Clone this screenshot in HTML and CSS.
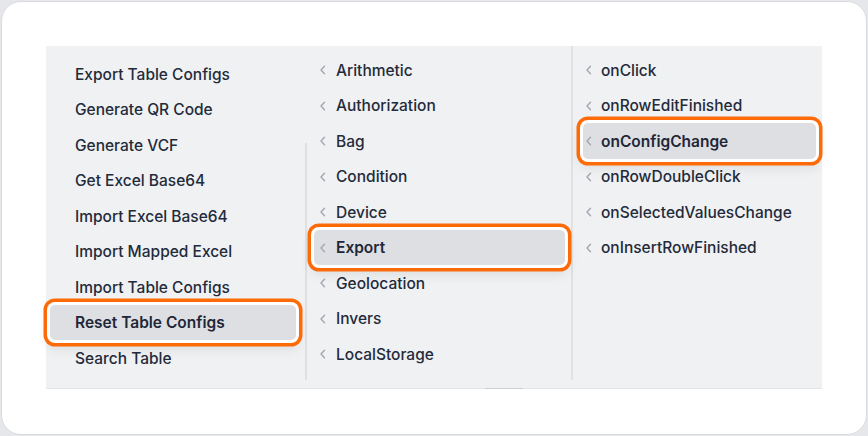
FILE: index.html
```html
<!DOCTYPE html>
<html lang="en">
<head>
<meta charset="utf-8">
<title>Menu</title>
<link rel="stylesheet" href="styles.css">
</head>
<body>
<div class="card">
  <div class="panel">
    <div class="cols">
      <ul class="col col1">
        <li class="item">Export Table Configs</li>
        <li class="item">Generate QR Code</li>
        <li class="item">Generate VCF</li>
        <li class="item">Get Excel Base64</li>
        <li class="item">Import Excel Base64</li>
        <li class="item">Import Mapped Excel</li>
        <li class="item">Import Table Configs</li>
        <li class="item active">Reset Table Configs</li>
        <li class="item">Search Table</li>
      </ul>
      <ul class="col col2">
        <li class="item"><svg class="chev" viewBox="0 0 10 10"><path d="M6.5 1.2 L3 5 L6.5 8.8"/></svg>Arithmetic</li>
        <li class="item"><svg class="chev" viewBox="0 0 10 10"><path d="M6.5 1.2 L3 5 L6.5 8.8"/></svg>Authorization</li>
        <li class="item"><svg class="chev" viewBox="0 0 10 10"><path d="M6.5 1.2 L3 5 L6.5 8.8"/></svg>Bag</li>
        <li class="item"><svg class="chev" viewBox="0 0 10 10"><path d="M6.5 1.2 L3 5 L6.5 8.8"/></svg>Condition</li>
        <li class="item"><svg class="chev" viewBox="0 0 10 10"><path d="M6.5 1.2 L3 5 L6.5 8.8"/></svg>Device</li>
        <li class="item active"><svg class="chev" viewBox="0 0 10 10"><path d="M6.5 1.2 L3 5 L6.5 8.8"/></svg>Export</li>
        <li class="item"><svg class="chev" viewBox="0 0 10 10"><path d="M6.5 1.2 L3 5 L6.5 8.8"/></svg>Geolocation</li>
        <li class="item"><svg class="chev" viewBox="0 0 10 10"><path d="M6.5 1.2 L3 5 L6.5 8.8"/></svg>Invers</li>
        <li class="item"><svg class="chev" viewBox="0 0 10 10"><path d="M6.5 1.2 L3 5 L6.5 8.8"/></svg>LocalStorage</li>
      </ul>
      <ul class="col col3">
        <li class="item"><svg class="chev" viewBox="0 0 10 10"><path d="M6.5 1.2 L3 5 L6.5 8.8"/></svg>onClick</li>
        <li class="item"><svg class="chev" viewBox="0 0 10 10"><path d="M6.5 1.2 L3 5 L6.5 8.8"/></svg>onRowEditFinished</li>
        <li class="item active"><svg class="chev" viewBox="0 0 10 10"><path d="M6.5 1.2 L3 5 L6.5 8.8"/></svg>onConfigChange</li>
        <li class="item"><svg class="chev" viewBox="0 0 10 10"><path d="M6.5 1.2 L3 5 L6.5 8.8"/></svg>onRowDoubleClick</li>
        <li class="item"><svg class="chev" viewBox="0 0 10 10"><path d="M6.5 1.2 L3 5 L6.5 8.8"/></svg>onSelectedValuesChange</li>
        <li class="item"><svg class="chev" viewBox="0 0 10 10"><path d="M6.5 1.2 L3 5 L6.5 8.8"/></svg>onInsertRowFinished</li>
      </ul>
    </div>
    <div class="hscroll"><span class="hthumb"></span></div>
  </div>
</div>
</body>
</html>
```

FILE: styles.css
```css
* { box-sizing: border-box; }

html, body {
  margin: 0;
  padding: 0;
  background: #e6e7ea;
}

body {
  width: 868px;
  height: 436px;
  overflow: hidden;
  font-family: Inter, "Noto Sans", "Liberation Sans", sans-serif;
}

.card {
  margin: 1px;
  width: 866px;
  height: 434px;
  background: #ffffff;
  border: 1px solid #d9dbe0;
  border-radius: 20px;
  padding: 44px;
}

.panel {
  width: 776px;
  height: 343px;
  background: #f0f1f3;
  border-bottom: 1px solid #e3e4e7;
  display: flex;
  flex-direction: column;
}

.cols {
  display: flex;
  height: 335px;
}

.col {
  list-style: none;
  margin: 0;
  display: flex;
  flex-direction: column;
  position: relative;
}

.col1 {
  width: 261px;
  padding: 10.25px 0 0 0;
}

.col1::after {
  content: "";
  position: absolute;
  right: 0;
  top: 97px;
  bottom: 0;
  width: 2px;
  background: #dfe0e3;
}

.col2 {
  width: 264px;
  padding: 6.25px 0 0 0;
}

.col3 {
  width: 251px;
  padding: 6.25px 0 0 0;
  border-left: 2px solid #e0e1e4;
}

.item {
  height: 35.5px;
  flex: 0 0 35.5px;
  display: flex;
  align-items: center;
  font-size: 15.5px;
  font-weight: 500;
  color: #232b3b;
  border-radius: 5px;
  white-space: nowrap;
}

.col1 .item {
  margin: 0 11px 0 4px;
  padding-left: 25px;
}

.col2 .item {
  margin: 0 6px 0 7px;
  padding-left: 4px;
}

.col3 .item {
  margin: 0 6px 0 10px;
  padding-left: 1px;
}

.chev {
  width: 10px;
  height: 10px;
  flex: 0 0 10px;
  fill: none;
  stroke: #a3a8b0;
  stroke-width: 1.4;
  stroke-linecap: round;
  stroke-linejoin: round;
}

.col2 .chev { margin-right: 8px; }
.col3 .chev { margin-right: 7px; }

.item.active {
  background: #dedfe3;
  font-weight: 600;
  color: #1f2737;
  box-shadow: 0 0 0 3px #ffffff, 0 0 0 6.5px #fd6a08, 0 6px 12px 4px rgba(0, 0, 0, 0.08);
  position: relative;
  z-index: 1;
}

.hscroll {
  position: relative;
  height: 8px;
}

.hthumb {
  position: absolute;
  left: 439px;
  bottom: -1px;
  width: 38px;
  height: 1px;
  background: #cfd0d3;
}
```
